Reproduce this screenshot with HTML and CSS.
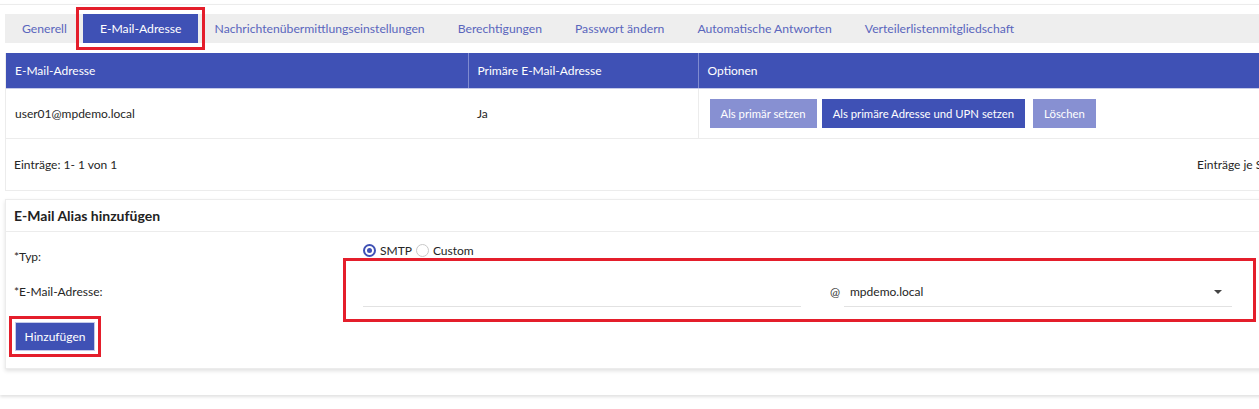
FILE: index.html
```html
<!DOCTYPE html>
<html lang="de">
<head>
    <meta charset="UTF-8">
    <title>E-Mail-Adresse</title>
    <link rel="stylesheet" href="styles.css">
</head>
<body>
    <div class="panel">
        <!-- Tabs -->
        <nav class="tabs">
            <a class="tab">Generell</a>
            <a class="tab active">E-Mail-Adresse</a>
            <a class="tab">Nachrichtenübermittlungseinstellungen</a>
            <a class="tab">Berechtigungen</a>
            <a class="tab">Passwort ändern</a>
            <a class="tab">Automatische Antworten</a>
            <a class="tab">Verteilerlistenmitgliedschaft</a>
        </nav>

        <!-- Address list -->
        <div class="card list-card">
            <table class="grid">
                <thead>
                    <tr>
                        <th class="col-mail">E-Mail-Adresse</th>
                        <th class="col-primary">Primäre E-Mail-Adresse</th>
                        <th class="col-options">Optionen</th>
                    </tr>
                </thead>
                <tbody>
                    <tr>
                        <td>user01@mpdemo.local</td>
                        <td>Ja</td>
                        <td class="options">
                            <button class="btn btn-light">Als primär setzen</button>
                            <button class="btn">Als primäre Adresse und UPN setzen</button>
                            <button class="btn btn-light btn-delete">Löschen</button>
                        </td>
                    </tr>
                </tbody>
            </table>
            <div class="pager">
                <span>Einträge: 1- 1 von 1</span>
                <span>Einträge je Seite: 10</span>
            </div>
        </div>

        <!-- Add alias -->
        <div class="card alias-card">
            <h2 class="card-title">E-Mail Alias hinzufügen</h2>
            <div class="form">
                <div class="form-row row-type">
                    <label class="form-label">*Typ:</label>
                    <div class="radios">
                        <span class="radio checked"></span><span class="radio-text">SMTP</span>
                        <span class="radio"></span><span class="radio-text">Custom</span>
                    </div>
                </div>
                <div class="form-row row-address">
                    <label class="form-label">*E-Mail-Adresse:</label>
                    <div class="address-fields">
                        <div class="text-input"></div>
                        <span class="at">@</span>
                        <div class="select">
                            <span>mpdemo.local</span>
                            <span class="caret"></span>
                        </div>
                    </div>
                </div>
                <button class="btn btn-add">Hinzufügen</button>
            </div>
        </div>
    </div>
</body>
</html>
```

FILE: styles.css
```css
* {
    margin: 0;
    padding: 0;
    box-sizing: border-box;
}

body {
    font-family: Lato, "Open Sans", sans-serif;
    font-size: 12px;
    color: #252525;
    background: #fff;
    overflow: hidden;
    width: 1259px;
    height: 409px;
}

/* Outer panel */
.panel {
    width: 1340px;
    margin-top: 4px;
    padding: 9px 0 26px 5px;
    border-top: 1px solid #ececec;
    box-shadow: 0 2px 3px rgba(0, 0, 0, 0.12);
}

/* Tabs */
.tabs {
    display: flex;
    height: 29px;
    background: #eeeeee;
}

.tab {
    padding: 0 16.5px;
    line-height: 29px;
    font-size: 12.2px;
    color: #5a66bd;
    cursor: pointer;
}

.tab:first-child {
    padding-left: 17px;
}

.tab.active {
    background: #3f51b5;
    color: #fff;
    outline: 3px solid #e41e2b;
    outline-offset: 4px;
}

/* Cards */
.card {
    background: #fff;
    border: 1px solid #ececec;
}

.list-card {
    margin-top: 10px;
    border-top: none;
}

/* Table */
.grid {
    width: 100%;
    border-collapse: collapse;
}

.grid th {
    height: 35px;
    background: #3f51b5;
    color: #fff;
    font-weight: 400;
    text-align: left;
    padding: 0 9px;
    border-bottom: 1px solid #c5cae9;
}

.grid th + th {
    border-left: 1px solid #7f8bd0;
}

.col-mail {
    width: 462px;
}

.col-primary {
    width: 230px;
}

.grid td {
    height: 50px;
    padding: 0 9px;
    border-bottom: 1px solid #ececec;
}

.grid td.options {
    border-left: 1px solid #ececec;
    padding-left: 11px;
}

.btn {
    height: 29px;
    padding: 0 11px;
    border: none;
    background: #3f51b5;
    color: #fff;
    font-family: inherit;
    font-size: 11.3px;
    cursor: pointer;
    margin-right: 2px;
}

.btn-light {
    background: #8790d2;
}

.btn-delete {
    margin-left: 3px;
}

.pager {
    display: grid;
    grid-template-columns: 1183px auto;
    height: 51px;
    align-items: center;
    padding-left: 8px;
    white-space: nowrap;
}

/* Alias form */
.alias-card {
    margin-top: 8px;
    box-shadow: 0 2px 4px rgba(0, 0, 0, 0.12);
    padding-bottom: 17px;
}

.card-title {
    font-size: 14px;
    font-weight: 700;
    color: #222;
    height: 32px;
    line-height: 32px;
    padding-left: 8px;
    border-bottom: 1px solid #ececec;
}

.form {
    padding-left: 8px;
}

.form-row {
    display: flex;
    height: 40px;
}

.form-label {
    width: 349px;
    flex-shrink: 0;
    line-height: 16px;
}

.row-type .form-label {
    padding-top: 17px;
}

.radios {
    display: flex;
    align-items: center;
    height: 16px;
    margin-top: 11px;
}

.radio {
    width: 13px;
    height: 13px;
    border: 1px solid #c8c8c8;
    border-radius: 50%;
    margin-right: 4px;
    position: relative;
}

.radio.checked {
    border: 2px solid #3f51b5;
}

.radio.checked::after {
    content: "";
    position: absolute;
    left: 2px;
    top: 2px;
    width: 5px;
    height: 5px;
    border-radius: 50%;
    background: #3f51b5;
}

.radio-text {
    margin-right: 4px;
}

.row-address .form-label {
    padding-top: 12px;
}

.address-fields {
    display: flex;
    align-items: flex-start;
    padding-top: 6px;
    position: relative;
}

/* red highlight round the address inputs */
.address-fields::after {
    content: "";
    position: absolute;
    left: -20px;
    top: -14px;
    width: 907px;
    height: 58px;
    border: 3px solid #e41e2b;
    pointer-events: none;
}

.text-input {
    width: 438px;
    height: 29px;
    border-bottom: 1px solid #e2e2e2;
}

.at {
    margin-left: 29px;
    width: 14px;
    line-height: 28px;
    color: #333;
}

.select {
    display: flex;
    align-items: center;
    justify-content: space-between;
    width: 388px;
    height: 29px;
    padding: 0 10px 0 6px;
    border-bottom: 1px solid #e2e2e2;
}

.caret {
    width: 0;
    height: 0;
    border-left: 4px solid transparent;
    border-right: 4px solid transparent;
    border-top: 4px solid #444;
}

.btn-add {
    margin-top: 10px;
    margin-left: 1px;
    width: 80px;
    padding: 0;
    font-size: 12px;
    border: 1px solid #c5cae9;
    outline: 3px solid #e41e2b;
    outline-offset: 3px;
}
```
